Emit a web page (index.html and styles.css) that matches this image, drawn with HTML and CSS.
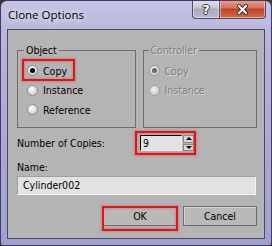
FILE: index.html
```html
<!DOCTYPE html>
<html lang="en">
<head>
  <meta charset="UTF-8" />
  <title>Clone Options</title>
  <link rel="stylesheet" href="styles.css">
</head>
<body>
  <div class="window">
    <div class="titlebar">
      <span class="title">Clone Options</span>
      <div class="controls">
        <span class="ctl help">?</span>
        <span class="ctl close">
          <svg width="11" height="11" viewBox="0 0 11 11">
            <path d="M2 2 L9 9 M9 2 L2 9" stroke="#3a2a2a" stroke-width="4" stroke-linecap="square" />
            <path d="M2 2 L9 9 M9 2 L2 9" stroke="#fff" stroke-width="2" stroke-linecap="square" />
          </svg>
        </span>
      </div>
    </div>

    <div class="client">
      <div class="groups">
        <fieldset class="group object">
          <legend>Object</legend>
          <div class="radio checked mark">
            <span class="dot"></span><span>Copy</span>
          </div>
          <div class="radio">
            <span class="dot"></span><span>Instance</span>
          </div>
          <div class="radio">
            <span class="dot"></span><span>Reference</span>
          </div>
        </fieldset>
        <fieldset class="group controller disabled">
          <legend>Controller</legend>
          <div class="radio checked">
            <span class="dot"></span><span>Copy</span>
          </div>
          <div class="radio">
            <span class="dot"></span><span>Instance</span>
          </div>
        </fieldset>
      </div>

      <div class="copies">
        <span class="copies-label">Number of Copies:</span>
        <div class="spinner mark">
          <span class="field">9</span>
          <span class="arrows">
            <span class="arrow up"></span>
            <span class="arrow down"></span>
          </span>
        </div>
      </div>

      <div class="name-label">Name:</div>
      <div class="name-field">Cylinder002</div>

      <div class="buttons">
        <button class="ok mark">OK</button>
        <button>Cancel</button>
      </div>
    </div>
  </div>
</body>
</html>
```

FILE: styles.css
```css
body {
  margin: 0;
  background: #4a3038;
  font-family: "DejaVu Sans Condensed", "DejaVu Sans", sans-serif;
  font-stretch: condensed;
  font-size: 10.5px;
  color: #000;
}

.window {
  width: 272px;
  height: 246px;
  box-sizing: border-box;
  border: 1px solid #3e3c62;
  border-radius: 7px 7px 3px 3px;
  background: linear-gradient(to bottom, #c6c4e4 0, #b6b4da 40px, #a19fcd 100%);
  display: flex;
  flex-direction: column;
  overflow: hidden;
}

/* title bar */
.titlebar {
  height: 28px;
  display: flex;
  justify-content: space-between;
  align-items: flex-start;
  padding-left: 7px;
}

.title {
  font-family: "Open Sans", sans-serif;
  font-stretch: normal;
  font-size: 11.5px;
  margin-top: 6px;
  text-shadow: 0 0 6px rgba(255, 255, 255, 0.9), 0 0 10px rgba(255, 255, 255, 0.6);
}

.controls {
  display: flex;
  margin-right: 5px;
  margin-top: -1px;
}

.ctl {
  height: 19px;
  box-sizing: border-box;
  border: 1px solid #4d4b6a;
  border-top: none;
  display: flex;
  align-items: center;
  justify-content: center;
  box-shadow: inset 0 0 0 1px rgba(255, 255, 255, 0.45);
}

.help {
  width: 27px;
  border-right: none;
  border-radius: 0 0 0 4px;
  background: linear-gradient(to bottom, #e2e2ee 0, #c4c4d6 45%, #a9a9c0 50%, #b8b8d0 100%);
  color: #fff;
  font-family: "DejaVu Sans", sans-serif;
  font-stretch: normal;
  font-weight: bold;
  font-size: 13px;
  text-shadow: 1px 0 0 #333, -1px 0 0 #333, 0 1px 0 #333, 0 -1px 0 #333;
}

.close {
  width: 47px;
  border-radius: 0 0 4px 0;
  background: linear-gradient(to bottom, #e6a494 0, #d4705a 45%, #c0402a 50%, #d46a4c 100%);
}

/* client area */
.client {
  flex: 1;
  margin: 0 6px 6px 6px;
  border: 1px solid #4c4a60;
  background: #b4b4b4;
  padding: 14px 7px 0 9px;
}

.groups {
  display: flex;
  gap: 7px;
  height: 84px;
}

.group {
  flex: 1;
  min-width: 0;
  margin: 0;
  box-sizing: border-box;
  border: 1px solid #6e6e6e;
  padding: 5px 0 0 9px;
}

.group legend {
  padding: 0 2px;
  line-height: 12px;
}

.object legend {
  margin-left: -3px;
}

.controller {
  padding-left: 5px;
}

.radio {
  display: flex;
  align-items: center;
  gap: 5px;
  height: 19.5px;
  position: relative;
}

.dot {
  width: 11px;
  height: 11px;
  box-sizing: border-box;
  border-radius: 50%;
  border: 1px solid #8c8c8c;
  background: radial-gradient(circle at 40% 35%, #fdfdfd 0, #dedede 55%, #bdbdbd 100%);
  display: flex;
  align-items: center;
  justify-content: center;
}

.checked .dot::before {
  content: "";
  width: 5px;
  height: 5px;
  border-radius: 50%;
  background: #000;
}

.disabled {
  color: #7e7e7e;
  text-shadow: 1px 1px 0 #dadada;
}

.disabled .dot {
  border-color: #9c9c9c;
  background: radial-gradient(circle at 40% 35%, #f0f0f0 0, #d4d4d4 60%, #c0c0c0 100%);
}

.disabled .checked .dot::before {
  background: #6a6a6a;
}

/* red annotation boxes */
.mark {
  position: relative;
}

.mark::after {
  content: "";
  position: absolute;
  box-sizing: border-box;
  border: 2px solid #d01c1c;
  box-shadow: 0 0 2px 1px rgba(235, 90, 90, 0.55), inset 0 0 2px 1px rgba(235, 90, 90, 0.5);
  pointer-events: none;
}

.radio.mark::after {
  left: -5px;
  top: -2px;
  width: 53px;
  height: 22px;
}

.spinner.mark::after {
  left: -5px;
  top: -4px;
  width: 61px;
  height: 24px;
}

.ok.mark::after {
  left: -2px;
  top: -1px;
  width: 76px;
  height: 25px;
}

/* number of copies */
.copies {
  display: flex;
  align-items: center;
  height: 30px;
}

.copies-label {
  width: 123px;
}

.spinner {
  display: flex;
  height: 16px;
  gap: 1px;
}

.field {
  width: 42px;
  box-sizing: border-box;
  border: 1px solid #f2f2f2;
  border-top-color: #000;
  border-left-color: #000;
  background: #e2e2e2;
  padding-left: 2px;
  line-height: 14px;
}

.arrows {
  width: 11px;
  display: flex;
  flex-direction: column;
  gap: 1px;
}

.arrow {
  flex: 1;
  background: #d6d6d6;
  border: 1px solid #8a8a8a;
  display: flex;
  align-items: center;
  justify-content: center;
}

.arrow::before {
  content: "";
  border-left: 3px solid transparent;
  border-right: 3px solid transparent;
}

.up::before {
  border-bottom: 3px solid #000;
}

.down::before {
  border-top: 3px solid #000;
}

/* name */
.name-label {
  height: 18px;
  line-height: 18px;
}

.name-field {
  width: 239px;
  height: 19px;
  box-sizing: border-box;
  border: 1px solid #f4f4f4;
  border-top-color: #a0a0a0;
  border-left-color: #a0a0a0;
  background: #e2e2e2;
  padding-left: 5px;
  line-height: 17px;
}

/* buttons */
.buttons {
  display: flex;
  justify-content: flex-end;
  gap: 6px;
  margin-top: 11px;
}

button {
  width: 74px;
  height: 20px;
  margin: 0;
  padding: 0;
  font: inherit;
  color: #000;
  background: #b9b9b9;
  border: 1px solid #6c6c6c;
  box-shadow: inset 1px 1px 0 #d6d6d6;
}
```
